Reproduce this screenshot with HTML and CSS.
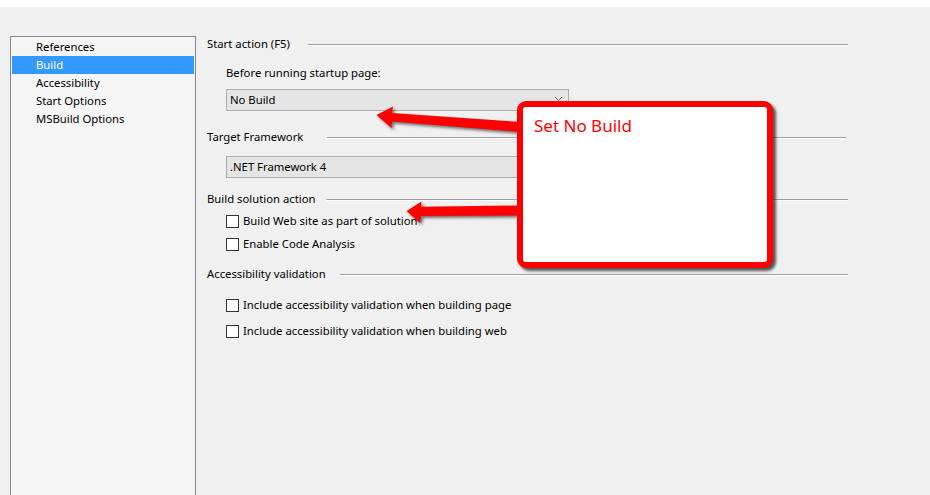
FILE: index.html
```html
<!DOCTYPE html>
<html>
<head>
<meta charset="utf-8">
<link rel="stylesheet" href="styles.css">
</head>
<body>
<div class="topstrip"></div>
<div class="main">
  <div class="sidebar">
    <ul class="navlist">
      <li class="navitem">References</li>
      <li class="navitem selected">Build</li>
      <li class="navitem">Accessibility</li>
      <li class="navitem">Start Options</li>
      <li class="navitem">MSBuild Options</li>
    </ul>
  </div>
  <div class="panel">
    <div class="group-head h1"><span>Start action (F5)</span><span class="rule"></span></div>
    <div class="label l1">Before running startup page:</div>
    <div class="combo c1"><span>No Build</span>
      <svg class="chev" width="9" height="6" viewBox="0 0 9 6"><path d="M1 1 L4.5 4.5 L8 1" fill="none" stroke="#606060" stroke-width="1"/></svg>
    </div>
    <div class="group-head h2"><span>Target Framework</span><span class="rule"></span></div>
    <div class="combo c2"><span>.NET Framework 4</span></div>
    <div class="group-head h3"><span>Build solution action</span><span class="rule"></span></div>
    <label class="check k1"><span class="box"></span><span>Build Web site as part of solution</span></label>
    <label class="check k2"><span class="box"></span><span>Enable Code Analysis</span></label>
    <div class="group-head h4"><span>Accessibility validation</span><span class="rule"></span></div>
    <label class="check k3"><span class="box"></span><span>Include accessibility validation when building page</span></label>
    <label class="check k4"><span class="box"></span><span>Include accessibility validation when building web</span></label>
  </div>
</div>
<svg class="arrows" width="930" height="495" viewBox="0 0 930 495">
  <polygon points="376.5,115 393,106.5 392,113 520,122 520,132 392,121.5 391.5,128" fill="#ff0000"/>
  <polygon points="406.5,211 421.5,201.5 421,206.8 520,205.5 520,215.5 421,216 420,223" fill="#ff0000"/>
</svg>
<div class="callout"><span class="callout-text">Set No Build</span></div>
</body>
</html>
```
FILE: styles.css
```css
html, body {
  margin: 0;
  padding: 0;
}
body {
  width: 930px;
  height: 495px;
  overflow: hidden;
  background: #f0f0f0;
  font-family: "Noto Sans", "Open Sans", sans-serif;
  font-size: 11.3px;
  color: #000;
  position: relative;
  display: flex;
  flex-direction: column;
}
.topstrip {
  height: 7px;
  background: #ffffff;
  flex: none;
}
.main {
  flex: 1;
  display: flex;
}
.sidebar {
  margin-left: 10px;
  margin-top: 29px;
  width: 182px;
  border: 1px solid #828790;
  border-bottom: none;
  background: #f5f5f5;
  padding: 1px 1px 0 1px;
  flex: none;
  box-sizing: content-box;
}
.navlist {
  list-style: none;
  margin: 0;
  padding: 0;
}
.navitem {
  height: 18px;
  line-height: 18px;
  padding-left: 24px;
  white-space: nowrap;
}
.navitem.selected {
  background: #3399ff;
  color: #ffffff;
}
.panel {
  margin-left: 11px;
  padding-top: 29px;
  width: 641px;
  display: flex;
  flex-direction: column;
}
.group-head {
  display: flex;
  align-items: center;
  height: 16px;
  line-height: 16px;
  white-space: nowrap;
}
.rule {
  flex: 1;
  height: 1px;
  background: #a0a0a0;
  border-bottom: 1px solid #ffffff;
  margin-top: 1px;
}
.h1 .rule { margin-left: 18px; }
.h2 { margin-top: 18px; }
.h2 .rule { margin-left: 24px; margin-right: 2px; }
.h3 { margin-top: 13px; }
.h3 .rule { margin-left: 10px; }
.h4 { margin-top: 14px; }
.h4 .rule { margin-left: 14px; }
.label {
  margin-left: 19px;
  height: 16px;
  line-height: 16px;
}
.l1 { margin-top: 13px; }
.combo {
  margin-left: 19px;
  width: 333px;
  height: 20px;
  border: 1px solid #acacac;
  background: #e5e5e5;
  display: flex;
  align-items: center;
  justify-content: space-between;
  padding: 0 5px 0 3px;
  box-sizing: content-box;
  line-height: 20px;
}
.c1 { margin-top: 8px; }
.c2 { margin-top: 11px; }
.chev { margin-top: -2px; }
.check {
  display: flex;
  align-items: center;
  margin-left: 19px;
  height: 16px;
  line-height: 16px;
  white-space: nowrap;
}
.box {
  width: 11px;
  height: 11px;
  border: 1px solid #333333;
  background: #ffffff;
  margin-right: 4px;
  flex: none;
}
.k1 { margin-top: 6px; }
.k2 { margin-top: 7px; }
.k3 { margin-top: 15px; }
.k4 { margin-top: 10px; }
.arrows {
  position: absolute;
  left: 0;
  top: 0;
  filter: drop-shadow(2px 2px 1.5px rgba(0, 0, 0, 0.55));
}
.callout {
  position: absolute;
  left: 517px;
  top: 101px;
  border: 6px solid #ff0000;
  border-radius: 9px;
  background: #ffffff;
  box-shadow: 3px 3px 3px rgba(0, 0, 0, 0.65);
  padding: 8px 0 0 11px;
  box-sizing: content-box;
  width: 233px;
  height: 147px;
}
.callout-text {
  color: #ff0000;
  font-size: 17px;
  line-height: 22px;
  white-space: nowrap;
}
```
